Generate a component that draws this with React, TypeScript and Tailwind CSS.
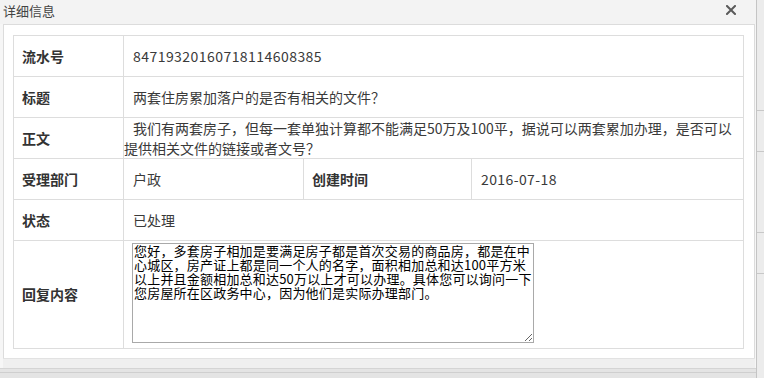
const reply =
  '您好，多套房子相加是要满足房子都是首次交易的商品房，都是在中\n心城区，房产证上都是同一个人的名字，面积相加总和达100平方米\n以上并且金额相加总和达50万以上才可以办理。具体您可以询问一下\n您房屋所在区政务中心，因为他们是实际办理部门。';

function CloseIcon() {
  return (
    <svg width="10" height="10" viewBox="0 0 10 10" className="block">
      <path d="M1 1 L9 9 M9 1 L1 9" stroke="#5a5a5a" strokeWidth="2" strokeLinecap="square" />
    </svg>
  );
}

export default function App() {
  const label = 'border border-[#dddddd] pl-[8px] font-bold text-[#333333] text-left align-middle';
  const value = 'border border-[#dddddd] pl-[9px] text-[#3a3a3a] align-middle';

  return (
    <div
      className="flex h-[378px] w-[764px] overflow-hidden bg-[#eeeeee]"
      style={{ fontFamily: '"Noto Sans CJK SC", "Microsoft YaHei", sans-serif' }}
    >
      <div className="flex w-[757px] flex-col border-r border-[#c4c4c4]">
        <div className="flex h-[24px] items-center justify-between bg-[#f3f3f3] pb-[4px] pl-[3px] pr-[20px]">
          <span className="text-[13px] leading-none text-[#444444]">详细信息</span>
          <CloseIcon />
        </div>
        <div className="flex flex-col bg-[#f6f6f6] pl-[3px] pr-[1px]">
          <div className="h-[334px] border-t border-l border-r border-[#dcdcdc] bg-white pl-[9px] pt-[10px]">
            <table className="w-[730px] table-fixed border-collapse text-[14px]">
              <colgroup>
                <col className="w-[110px]" />
                <col className="w-[180px]" />
                <col className="w-[168px]" />
                <col className="w-[272px]" />
              </colgroup>
              <tbody>
                <tr className="h-[41px]">
                  <th className={label}>流水号</th>
                  <td className={`${value} tracking-[0.45px]`} colSpan={3}>84719320160718114608385</td>
                </tr>
                <tr className="h-[41px]">
                  <th className={label}>标题</th>
                  <td className={value} colSpan={3}>两套住房累加落户的是否有相关的文件？</td>
                </tr>
                <tr className="h-[41px]">
                  <th className={label}>正文</th>
                  <td
                    className="border border-[#dddddd] py-0 align-middle text-[#3a3a3a] leading-[20px] indent-[9px]"
                    colSpan={3}
                  >
                    我们有两套房子，但每一套单独计算都不能满足50万及100平，据说可以两套累加办理，是否可以
                    <br />
                    提供相关文件的链接或者文号？
                  </td>
                </tr>
                <tr className="h-[41px]">
                  <th className={label}>受理部门</th>
                  <td className={value}>户政</td>
                  <th className={label}>创建时间</th>
                  <td className={`${value} tracking-[0.4px]`}>2016-07-18</td>
                </tr>
                <tr className="h-[41px]">
                  <th className={label}>状态</th>
                  <td className={value} colSpan={3}>已处理</td>
                </tr>
                <tr className="h-[107px]">
                  <th className={label}>回复内容</th>
                  <td className="border border-[#dddddd] pl-[8px] pt-[2px] pb-[5px] align-top" colSpan={3}>
                    <textarea
                      readOnly
                      defaultValue={reply}
                      className="block h-[100px] w-[402px] border border-[#a9a9a9] bg-white px-[1px] py-0 text-[13px] leading-[14px] tracking-[0.2px] text-black outline-none"
                      style={{ fontFamily: '"Noto Sans CJK SC", SimSun, sans-serif' }}
                    />
                  </td>
                </tr>
              </tbody>
            </table>
          </div>
          <div className="h-[10px] border-t border-[#e2e2e2] bg-[#efefef]" />
        </div>
        <div className="flex-1 border-t border-[#d4d4d4] bg-[#e4e4e4]">
          <div className="mt-[3px] h-[1px] bg-[#cfcfcf]" />
        </div>
      </div>
      <div className="flex w-[7px] flex-col bg-[#ececec]">
        <div className="mt-[110px] h-[1px] bg-[#c8c8c8]" />
        <div className="mt-[40px] h-[1px] bg-[#c8c8c8]" />
        <div className="mt-[80px] h-[1px] bg-[#c8c8c8]" />
        <div className="mt-[40px] h-[1px] bg-[#c8c8c8]" />
      </div>
    </div>
  );
}
